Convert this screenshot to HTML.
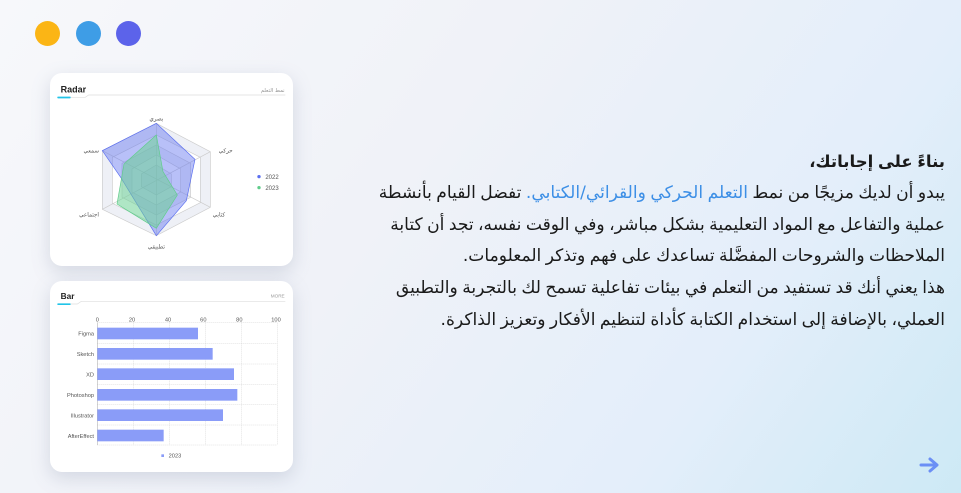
<!DOCTYPE html>
<html><head><meta charset="utf-8"><style>
*{margin:0;padding:0;box-sizing:border-box}
body{width:961px;height:493px;overflow:hidden;background:linear-gradient(125deg,#f7f8fb 0%,#f0f2f8 40%,#e3eefa 75%,#cde9f5 100%);font-family:"Liberation Sans","Noto Sans CJK SC",sans-serif;position:relative}
.dot{position:absolute;top:21px;width:25px;height:25px;border-radius:50%}
.card{position:absolute;left:50px;width:243px;background:#fff;border-radius:12px;box-shadow:0 6px 18px rgba(120,130,160,.25)}
.txt{position:absolute;right:16px;top:149px;width:600px;direction:rtl;text-align:right;white-space:nowrap;font-family:"DejaVu Sans","Noto Sans CJK SC",sans-serif;font-size:17.1px;line-height:31.7px;color:#1a1a1a;word-spacing:-1px}
.txt b{font-weight:bold;font-size:16.5px}
.hl{color:#3d8fe6}
</style></head><body>
<div class="dot" style="left:35px;background:#fbb515"></div>
<div class="dot" style="left:76px;background:#3e9de6"></div>
<div class="dot" style="left:116px;background:#5c63ea"></div>

<div class="card" style="top:73px;height:193px"></div>
<svg style="position:absolute;left:48px;top:70px" width="250" height="200" viewBox="0 0 750 600">
<text x="38" y="67" font-size="27" font-weight="bold" fill="#222" font-family="Liberation Sans">Radar</text>
<rect x="28" y="80" width="40" height="5" rx="2" fill="#21c4e8"/>
<path d="M68 82 H112 L122 75 H712" stroke="#ddd" stroke-width="2" fill="none"/>
<text x="710" y="66" font-size="16" fill="#999" text-anchor="end" font-family="DejaVu Sans">نمط التعلم</text>
<g stroke="#ccc" stroke-width="2">
<polygon points="325,160 487,245 487,412 325,497 163,418 163,242" fill="#eef0f6"/>
<polygon points="325,195 457,262 457,398 325,465 193,400 193,262" fill="#fff"/>
<polygon points="325,225 428,280 428,382 325,435 222,382 222,280" fill="#eef0f6"/>
<polygon points="325,255 398,297 398,366 325,405 252,366 252,297" fill="#fff"/>
<polygon points="325,285 370,312 370,350 325,375 280,350 280,312" fill="#eef0f6"/>
<line x1="325" y1="160" x2="325" y2="497"/><line x1="163" y1="242" x2="487" y2="412"/><line x1="487" y1="245" x2="163" y2="418"/>
</g>
<polygon points="325,160 441,268 415,392 325,497 218,322 163,242" fill="rgba(98,115,240,.45)" stroke="#5b6ff0" stroke-width="2"/>
<polygon points="325,195 345,305 388,375 325,475 207,402 228,282" fill="rgba(110,210,150,.55)" stroke="#5fcc8a" stroke-width="2"/>
<g font-size="17" fill="#555" font-family="DejaVu Sans">
<text x="325" y="152" text-anchor="middle">بصري</text>
<text x="512" y="247">حركي</text>
<text x="494" y="440">كتابي</text>
<text x="325" y="535" text-anchor="middle">تطبيقي</text>
<text x="153" y="440" text-anchor="end">اجتماعي</text>
<text x="153" y="248" text-anchor="end">سمعي</text>
</g>
<circle cx="633" cy="320" r="5" fill="#5b6ff0"/><text x="652" y="327" font-size="18" fill="#555" font-family="Liberation Sans">2022</text>
<circle cx="633" cy="353" r="5" fill="#5fcc8a"/><text x="652" y="360" font-size="18" fill="#555" font-family="Liberation Sans">2023</text>
</svg>

<div class="card" style="top:281px;height:191px"></div>
<svg style="position:absolute;left:48px;top:280px" width="250" height="195" viewBox="0 0 750 585">
<text x="38" y="57" font-size="25" font-weight="bold" fill="#222" font-family="Liberation Sans">Bar</text>
<rect x="28" y="70" width="40" height="5" rx="2" fill="#21c4e8"/>
<path d="M68 72 H88 L100 64 H712" stroke="#ddd" stroke-width="2" fill="none"/>
<text x="710" y="52" font-size="14" fill="#999" text-anchor="end" font-family="Liberation Sans">MORE</text>
<g stroke="#ccc" stroke-width="1.5" stroke-dasharray="3 3">
<line x1="256" y1="128" x2="256" y2="495"/><line x1="364" y1="128" x2="364" y2="495"/><line x1="472" y1="128" x2="472" y2="495"/><line x1="580" y1="128" x2="580" y2="495"/><line x1="688" y1="128" x2="688" y2="495"/>
<line x1="148" y1="128" x2="688" y2="128"/><line x1="148" y1="190" x2="688" y2="190"/><line x1="148" y1="252" x2="688" y2="252"/><line x1="148" y1="313" x2="688" y2="313"/><line x1="148" y1="374" x2="688" y2="374"/><line x1="148" y1="435" x2="688" y2="435"/><line x1="148" y1="495" x2="688" y2="495"/>
</g>
<line x1="148" y1="128" x2="148" y2="495" stroke="#bbb" stroke-width="2"/>
<g font-size="17" fill="#555" font-family="Liberation Sans" text-anchor="middle">
<text x="148" y="124">0</text><text x="252" y="124">20</text><text x="360" y="124">40</text><text x="466" y="124">60</text><text x="574" y="124">80</text><text x="684" y="124">100</text>
</g>
<g fill="#8a9cf8">
<rect x="148" y="143" width="302" height="35"/><rect x="148" y="204" width="346" height="35"/><rect x="148" y="265" width="410" height="35"/><rect x="148" y="327" width="420" height="35"/><rect x="148" y="388" width="377" height="35"/><rect x="148" y="449" width="199" height="35"/>
</g>
<g font-size="17" fill="#555" font-family="Liberation Sans" text-anchor="end">
<text x="138" y="166">Figma</text><text x="138" y="228">Sketch</text><text x="138" y="290">XD</text><text x="138" y="351">Photoshop</text><text x="138" y="413">Illustrator</text><text x="138" y="474">AfterEffect</text>
</g>
<rect x="340" y="523" width="8" height="8" fill="#8a9cf8"/><text x="362" y="532" font-size="17" fill="#555" font-family="Liberation Sans">2023</text>
</svg>

<div class="txt">
<div style="line-height:26px;margin-bottom:3px"><b>بناءً على إجاباتك،</b></div>
يبدو أن لديك مزيجًا من نمط <span class="hl">التعلم الحركي والقرائي/الكتابي.</span> تفضل القيام بأنشطة<br>
عملية والتفاعل مع المواد التعليمية بشكل مباشر، وفي الوقت نفسه، تجد أن كتابة<br>
الملاحظات والشروحات المفضَّلة تساعدك على فهم وتذكر المعلومات.<br>
هذا يعني أنك قد تستفيد من التعلم في بيئات تفاعلية تسمح لك بالتجربة والتطبيق<br>
العملي، بالإضافة إلى استخدام الكتابة كأداة لتنظيم الأفكار وتعزيز الذاكرة.
</div>

<svg style="position:absolute;left:919px;top:456px" width="22" height="18" viewBox="0 0 22 18">
<path d="M2 9 H18 M11 3 L18 9 L11 15" stroke="#6b8ff5" stroke-width="3" fill="none" stroke-linecap="round" stroke-linejoin="round"/>
</svg>
</body></html>
